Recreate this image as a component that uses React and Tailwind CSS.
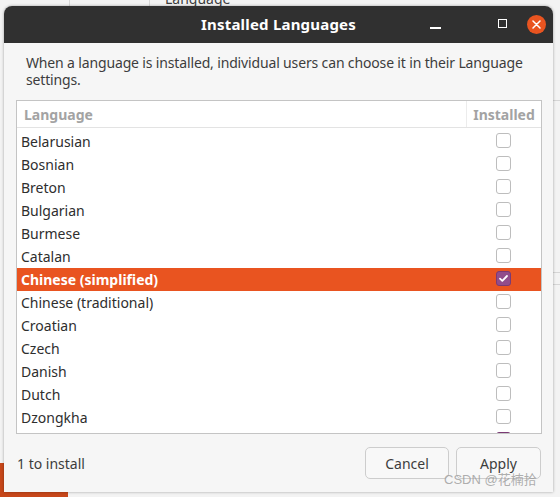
import { useState } from 'react'

const LANGS = [
  'Belarusian', 'Bosnian', 'Breton', 'Bulgarian', 'Burmese', 'Catalan',
  'Chinese (simplified)', 'Chinese (traditional)', 'Croatian', 'Czech',
  'Danish', 'Dutch', 'Dzongkha', 'English',
]

function Check({ on }) {
  if (on) {
    return (
      <div className="w-[15px] h-[15px] rounded-[3px] bg-[#924d8b] border border-[#7b3a74] flex items-center justify-center">
        <svg width="11" height="11" viewBox="0 0 11 11" fill="none">
          <path d="M2 5.6l2.3 2.2L9 3" stroke="white" strokeWidth="1.8" strokeLinecap="round" strokeLinejoin="round" />
        </svg>
      </div>
    )
  }
  return <div className="w-[15px] h-[15px] rounded-[3px] bg-white border border-[#bdbdbd]"></div>
}

export default function App() {
  const [selected] = useState(6)
  const font = { fontFamily: '"Noto Sans", "Open Sans", sans-serif' }

  return (
    <div className="relative w-[560px] h-[497px] overflow-hidden bg-[#f3f3f3]" style={font}>
      {/* window behind the dialog */}
      <div className="absolute left-[69px] top-0 w-px h-[6px] bg-[#d6d6d6]"></div>
      <div className="absolute left-[149px] top-0 w-px h-[6px] bg-[#d6d6d6]"></div>
      <div className="absolute left-[165px] top-[-12px] text-[14px] text-[#3d3d3d]">Language</div>
      <div className="absolute left-0 top-[463px] w-[4px] h-[34px] bg-[#c7471a]"></div>
      <div className="absolute left-0 top-[490px] w-[68px] h-[7px] bg-[#c7471a]"></div>
      <div className="absolute right-0 top-[100px] w-[7px] h-px bg-[#d6d6d6]"></div>
      <div className="absolute right-0 top-[272px] w-[7px] h-px bg-[#d6d6d6]"></div>
      <div className="absolute right-0 top-[284px] w-[7px] h-px bg-[#d6d6d6]"></div>

      {/* dialog */}
      <div className="absolute left-[4px] top-[6px] w-[549px] h-[486px] flex flex-col rounded-t-[8px] bg-[#f6f6f6] shadow-[0_0_3px_rgba(0,0,0,0.35)]">
        <div className="relative h-[37px] shrink-0 rounded-t-[8px] bg-[#303030] flex items-center justify-center">
          <span className="text-[15px] font-bold text-white tracking-[0.2px]">Installed Languages</span>
          <div className="absolute left-[426px] top-[21px] w-[11px] h-[1.5px] bg-white"></div>
          <div className="absolute left-[494px] top-[13px] w-[9px] h-[9px] border-[1.5px] border-white"></div>
          <div className="absolute left-[523px] top-[9px] w-[19px] h-[19px] rounded-full bg-[#e95420] flex items-center justify-center">
            <svg width="9" height="9" viewBox="0 0 9 9">
              <path d="M1 1l7 7M8 1l-7 7" stroke="white" strokeWidth="1.5" strokeLinecap="round" />
            </svg>
          </div>
        </div>

        <div className="flex-1 flex flex-col px-[12px]">
          <p className="pt-[11px] pl-[10px] text-[14px] leading-[17px] tracking-[-0.15px] text-[#3d3d3d]">
            When a language is installed, individual users can choose it in their Language settings.
          </p>

          <div className="mt-[12px] w-[526px] h-[334px] border border-[#c4c4c4] bg-white overflow-hidden">
            <div className="h-[27px] flex border-b border-[#e3e3e3]">
              <div className="flex-1 pl-[7px] flex items-center text-[14px] font-bold text-[#a3a3a3]">Language</div>
              <div className="w-[75px] border-l border-[#ececec] flex items-center justify-center text-[14px] font-bold text-[#a3a3a3]">Installed</div>
            </div>
            <div className="pt-[2px]">
              {LANGS.map((l, i) => (
                <div key={l} className={`h-[23px] flex items-center ${i === selected ? 'bg-[#e95420]' : ''}`}>
                  <div className={`flex-1 pl-[4px] text-[14px] ${i === selected ? 'font-bold text-white' : 'text-[#2e2e2e]'}`}>{l}</div>
                  <div className="w-[75px] mb-[2px] flex justify-center">
                    <Check on={i === selected || i === 13} />
                  </div>
                </div>
              ))}
            </div>
          </div>

          <div className="mt-[13px] flex items-center">
            <div className="flex-1 pl-[1px] text-[14px] text-[#3d3d3d]">1 to install</div>
            <button className="w-[84px] h-[32px] rounded-[5px] border border-[#cdcdcd] bg-[#f8f8f8] text-[14px] text-[#3d3d3d]">Cancel</button>
            <button className="ml-[7px] w-[85px] h-[32px] rounded-[5px] border border-[#cdcdcd] bg-[#f8f8f8] text-[14px] text-[#3d3d3d]">Apply</button>
          </div>
        </div>
      </div>

      <div className="absolute left-[444px] top-[470px] text-[13px] text-[#9a9a9a]/80" style={{ fontFamily: '"Liberation Sans", "Noto Sans CJK SC", sans-serif' }}>
        CSDN @花楠拾
      </div>
    </div>
  )
}
